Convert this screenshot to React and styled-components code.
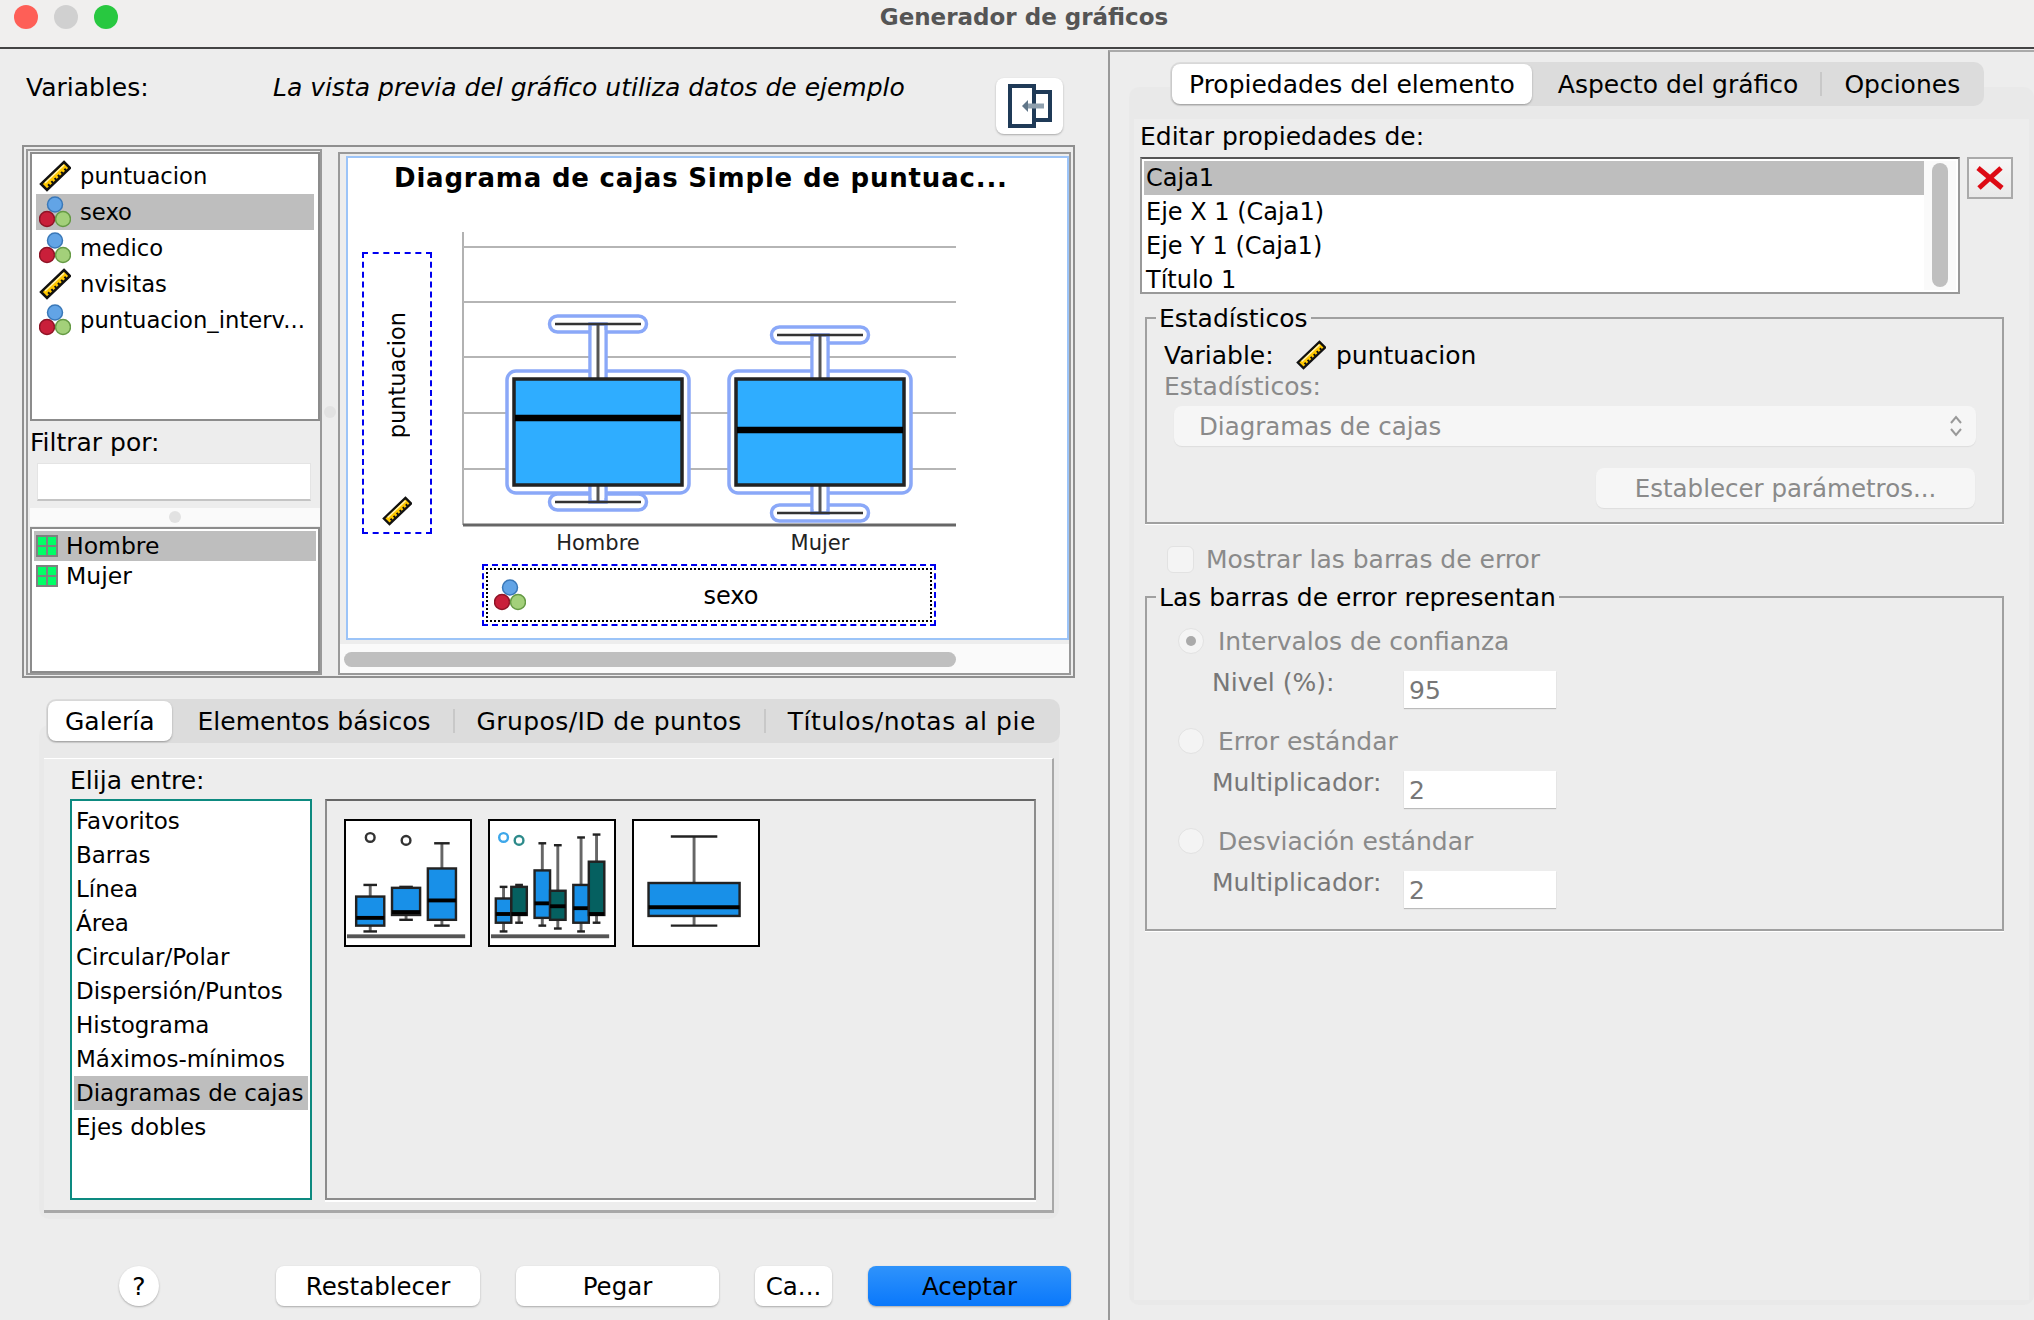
import { createGlobalStyle, styled } from "styled-components";

const FONT = `"DejaVu Sans", "Noto Sans", sans-serif`;
const PANEL = "#ededed";
const SELECTED = "#bebebe";
const HALO = "#8aa8f8";
const BOX_BLUE = "#2fadff";

const GlobalStyle = createGlobalStyle`
  html, body {
    margin: 0;
    background: ${PANEL};
  }

  body {
    color: #000;
    font-family: ${FONT};
    font-size: 25px;
  }
`;

const VARIABLES = [
  { name: "puntuacion", kind: "scale" },
  { name: "sexo", kind: "nominal", selected: true },
  { name: "medico", kind: "nominal" },
  { name: "nvisitas", kind: "scale" },
  { name: "puntuacion_interv...", kind: "nominal" },
];

const CATEGORIES = ["Favoritos", "Barras", "Línea", "Área", "Circular/Polar", "Dispersión/Puntos", "Histograma", "Máximos-mínimos", "Diagramas de cajas", "Ejes dobles"];

const CHART_BOXES = [
  { x: 598, top: 324, median: 418, bottom: 502 },
  { x: 820, top: 335, median: 430, bottom: 513 },
];

const THUMB_SIMPLE = [
  { x: 25, w: 29, top: 66, q3: 78, median: 100, q1: 108, bottom: 114, cap: 14 },
  { x: 62, w: 29, top: 68, q3: 69, median: 94, q1: 97, bottom: 102, cap: 14 },
  { x: 99, w: 29, top: 23, q3: 49, median: 82, q1: 102, bottom: 108, cap: 16 },
];

const THUMB_CLUSTERED = [
  { x: 14, w: 16, top: 68, q3: 80, median: 96, q1: 105, bottom: 114, cap: 8 },
  { x: 30, w: 16, top: 66, q3: 68, median: 96, q1: 97, bottom: 105, cap: 8, teal: true },
  { x: 54, w: 16, top: 23, q3: 51, median: 85, q1: 100, bottom: 108, cap: 8 },
  { x: 70, w: 16, top: 25, q3: 72, median: 88, q1: 102, bottom: 111, cap: 8, teal: true },
  { x: 94, w: 16, top: 17, q3: 66, median: 90, q1: 105, bottom: 114, cap: 8 },
  { x: 110, w: 16, top: 14, q3: 42, median: 96, q1: 97, bottom: 105, cap: 8, teal: true },
];

function ScaleIcon ({ size = 32 }) {
  return (
    <svg width={size} height={size} viewBox="0 0 32 32">
      <polygon fill="#ffc800" points="25,2 31,8 8,30 2,24" stroke="#111" strokeWidth="2.500" />
      <line stroke="#fff2b0" strokeWidth="1.500" x1="25" x2="6" y1="5" y2="23" />
      <line stroke="#111" strokeDasharray="2 2.500" strokeWidth="2.500" x1="27" x2="8" y1="9" y2="27" />
    </svg>
  );
}

function NominalIcon ({ size = 32 }) {
  return (
    <svg width={size} height={size} viewBox="0 0 32 32">
      <circle cx="16" cy="8.500" fill="#62a4e6" r="7.500" stroke="#3a78b8" strokeWidth="1.500" />
      <circle cx="8" cy="23" fill="#c91f3a" r="7.500" stroke="#8f1426" strokeWidth="1.500" />
      <circle cx="24" cy="23" fill="#a3d07a" r="7.500" stroke="#659a44" strokeWidth="1.500" />
    </svg>
  );
}

function CategoryIcon () {
  return (
    <svg width="22" height="22" viewBox="0 0 22 22">
      <rect fill="#808080" height="22" width="22" />
      <rect fill="#00ff66" height="8" width="8" x="2" y="2" />
      <rect fill="#00ff66" height="8" width="8" x="12" y="2" />
      <rect fill="#00ff66" height="8" width="8" x="2" y="12" />
      <rect fill="#00ff66" height="8" width="8" x="12" y="12" />
    </svg>
  );
}

function VariableIcon ({ kind, size }) {
  return kind === "scale" ? <ScaleIcon size={size} /> : <NominalIcon size={size} />;
}

function ChartBox ({ x, top, median, bottom }) {
  const boxTop = 379;
  const boxBottom = 485;

  return (
    <g>
      <rect fill="#fff" height="122" rx="9" stroke={HALO} strokeWidth="3.500" width="182" x={x - 91} y="371" />
      <rect fill="#fff" height="16" rx="8" stroke={HALO} strokeWidth="3.500" width="97" x={x - 48.5} y={top - 8} />
      <rect fill="#fff" height="16" rx="8" stroke={HALO} strokeWidth="3.500" width="97" x={x - 48.5} y={bottom - 8} />
      <rect fill="#fff" height={boxTop - top} stroke={HALO} strokeWidth="3.500" width="16" x={x - 8} y={top} />
      <rect fill="#fff" height={bottom - boxBottom} stroke={HALO} strokeWidth="3.500" width="16" x={x - 8} y={boxBottom} />
      <rect fill="#fff" height={boxTop - top + 10} width="12.500" x={x - 6.25} y={top + 6} />
      <rect fill="#fff" height={bottom - boxBottom + 2} width="12.500" x={x - 6.25} y={boxBottom - 6} />
      <line stroke="#555" strokeWidth="3" x1={x} x2={x} y1={top} y2={bottom} />
      <line stroke="#333" strokeWidth="2.500" x1={x - 43} x2={x + 43} y1={top} y2={top} />
      <line stroke="#333" strokeWidth="2.500" x1={x - 43} x2={x + 43} y1={bottom} y2={bottom} />
      <rect fill={BOX_BLUE} height={boxBottom - boxTop} stroke="#222" strokeWidth="3.500" width="168" x={x - 84} y={boxTop} />
      <line stroke="#000" strokeWidth="6.500" x1={x - 83} x2={x + 83} y1={median} y2={median} />
    </g>
  );
}

function ThumbBox ({ x, w, top, q3, median, q1, bottom, cap, teal }) {
  return (
    <g>
      <line stroke="#666" strokeWidth="3" x1={x} x2={x} y1={top} y2={bottom} />
      <line stroke="#222" strokeWidth="2.500" x1={x - cap / 2} x2={x + cap / 2} y1={top} y2={top} />
      <line stroke="#222" strokeWidth="2.500" x1={x - cap / 2} x2={x + cap / 2} y1={bottom} y2={bottom} />
      <rect fill={teal ? "#056060" : "#1890e8"} height={q1 - q3} stroke="#222" strokeWidth="2.500" width={w} x={x - w / 2} y={q3} />
      <line stroke="#000" strokeWidth="4" x1={x - w / 2} x2={x + w / 2} y1={median} y2={median} />
    </g>
  );
}

function ThumbSimple () {
  return (
    <Thumb viewBox="0 0 128 128">
      <circle cx="25" cy="17" fill="none" r="4.500" stroke="#333" strokeWidth="2.500" />
      <circle cx="62" cy="20" fill="none" r="4.500" stroke="#333" strokeWidth="2.500" />
      {THUMB_SIMPLE.map((b) => <ThumbBox key={b.x} {...b} />)}
      <rect fill="#555" height="4" width="122" x="1" y="117" />
    </Thumb>
  );
}

function ThumbClustered () {
  return (
    <Thumb viewBox="0 0 128 128">
      <circle cx="14" cy="17" fill="none" r="4.500" stroke="#3da7ea" strokeWidth="2.500" />
      <circle cx="30" cy="20" fill="none" r="4.500" stroke="#2d8a8a" strokeWidth="2.500" />
      {THUMB_CLUSTERED.map((b) => <ThumbBox key={b.x} {...b} />)}
      <rect fill="#555" height="4" width="122" x="1" y="117" />
    </Thumb>
  );
}

function ThumbSingle () {
  return (
    <Thumb viewBox="0 0 128 128">
      <ThumbBox bottom={108} cap={48} median={89} q1={98} q3={64} top={16} w={94} x={62} />
    </Thumb>
  );
}

export default function App () {
  return (
    <Window>
      <GlobalStyle />
      <TitleBar>
        <Lights>
          <Light $color="#fe5f57" />
          <Light $color="#d0d0d0" />
          <Light $color="#28c840" />
        </Lights>
        <WindowTitle>Generador de gráficos</WindowTitle>
      </TitleBar>
      <Body>
        <LeftPane>
          <TopRow>
            <VariablesLabel>Variables:</VariablesLabel>
            <PreviewNote>La vista previa del gráfico utiliza datos de ejemplo</PreviewNote>
            <ImportButton type="button">
              <svg width="44" height="44" viewBox="0 0 44 44">
                <path d="M2 2h24v40H2z M28 8h14v28H28" fill="none" stroke="#1f3a57" strokeWidth="4" />
                <path d="M19 22h17" stroke="#8fa0ae" strokeWidth="5" />
                <path d="M14 22l6-6v12z" fill="#5f7588" />
              </svg>
            </ImportButton>
          </TopRow>
          <Frame>
            <VarColumn>
              <VarList>
                {VARIABLES.map((v) => (
                  <VarRow key={v.name} $selected={v.selected}>
                    <VariableIcon kind={v.kind} />
                    {v.name}
                  </VarRow>
                ))}
              </VarList>
              <FilterLabel>Filtrar por:</FilterLabel>
              <FilterInput />
              <HSplitter><SplitDot /></HSplitter>
              <ValueList>
                <ValueRow $selected><CategoryIcon />Hombre</ValueRow>
                <ValueRow><CategoryIcon />Mujer</ValueRow>
              </ValueList>
            </VarColumn>
            <VSplitter><SplitDot /></VSplitter>
            <Preview>
              <Canvas>
                <ChartTitle>Diagrama de cajas Simple de puntuac...</ChartTitle>
                <Chart viewBox="348 158 720 480">
                  <line stroke="#999" strokeWidth="1.500" x1="463" x2="463" y1="232" y2="525" />
                  {[247, 302, 357, 413, 469].map((y) => (
                    <line key={y} stroke="#b5b5b5" strokeWidth="2" x1="463" x2="956" y1={y} y2={y} />
                  ))}
                  {CHART_BOXES.map((b) => <ChartBox key={b.x} {...b} />)}
                  <line stroke="#666" strokeWidth="3" x1="463" x2="956" y1="525" y2="525" />
                  <AxisLabel textAnchor="middle" x="598" y="550">Hombre</AxisLabel>
                  <AxisLabel textAnchor="middle" x="820" y="550">Mujer</AxisLabel>
                </Chart>
                <YDropZone>
                  <RotatedLabel>puntuacion</RotatedLabel>
                  <ScaleIcon size={30} />
                </YDropZone>
                <XDropZone>
                  <XDropInner>
                    <NominalIcon />
                    <XDropName>sexo</XDropName>
                  </XDropInner>
                </XDropZone>
              </Canvas>
              <HScroll><HThumb /></HScroll>
            </Preview>
          </Frame>
          <GalleryPane>
            <TabBar $offset={7} $overlap={18}>
              <Tab $active>Galería</Tab>
              <Tab $afterActive>Elementos básicos</Tab>
              <TabSep />
              <Tab $tracking={0.4}>Grupos/ID de puntos</Tab>
              <TabSep />
              <Tab $tracking={0.55}>Títulos/notas al pie</Tab>
            </TabBar>
            <GalleryPanel>
              <GalleryInner>
                <ChooseLabel>Elija entre:</ChooseLabel>
                <GalleryRow>
                  <ChartTypes>
                    {CATEGORIES.map((c) => (
                      <ChartType key={c} $selected={c === "Diagramas de cajas"}>{c}</ChartType>
                    ))}
                  </ChartTypes>
                  <Thumbs>
                    <ThumbSimple />
                    <ThumbClustered />
                    <ThumbSingle />
                  </Thumbs>
                </GalleryRow>
              </GalleryInner>
            </GalleryPanel>
          </GalleryPane>
          <Footer>
            <HelpButton type="button">?</HelpButton>
            <FooterButton $width={204} type="button">Restablecer</FooterButton>
            <FooterButton $width={203} type="button">Pegar</FooterButton>
            <FooterButton $width={77} type="button">Ca...</FooterButton>
            <FooterButton $primary $width={203} type="button">Aceptar</FooterButton>
          </Footer>
        </LeftPane>
        <RightPane>
          <TabBar $offset={41} $overlap={19}>
            <Tab $active>Propiedades del elemento</Tab>
            <Tab $afterActive>Aspecto del gráfico</Tab>
            <TabSep />
            <Tab>Opciones</Tab>
          </TabBar>
          <PropsPanel>
            <PropsInner>
              <PropsLabel>Editar propiedades de:</PropsLabel>
              <ElementRow>
                <ElementList>
                  <ElementRows>
                    <ElementItem $selected>Caja1</ElementItem>
                    <ElementItem>Eje X 1 (Caja1)</ElementItem>
                    <ElementItem>Eje Y 1 (Caja1)</ElementItem>
                    <ElementItem>Título 1</ElementItem>
                  </ElementRows>
                  <ListScroll><ListThumb /></ListScroll>
                </ElementList>
                <DeleteButton type="button">
                  <svg width="30" height="26" viewBox="0 0 30 26">
                    <path d="M3 3l24 20M26 3L4 23" fill="none" stroke="#dd0a14" strokeWidth="5" />
                  </svg>
                </DeleteButton>
              </ElementRow>
              <Group $height={207} $pad={18}>
                <Legend>Estadísticos</Legend>
                <VariableLine>
                  <span>Variable:</span>
                  <ScaleIcon size={30} />
                  <span>puntuacion</span>
                </VariableLine>
                <MutedLine>Estadísticos:</MutedLine>
                <SelectBox>
                  Diagramas de cajas
                  <svg width="16" height="26" viewBox="0 0 16 26">
                    <path d="M3 10l5-6 5 6M3 16l5 6 5-6" fill="none" stroke="#999" strokeWidth="2" />
                  </svg>
                </SelectBox>
                <ParamsButton type="button">Establecer parámetros...</ParamsButton>
              </Group>
              <CheckLine>
                <CheckBox />
                Mostrar las barras de error
              </CheckLine>
              <Group $height={335} $pad={30}>
                <Legend>Las barras de error representan</Legend>
                <RadioBlock>
                  <RadioLine><Radio $checked />Intervalos de confianza</RadioLine>
                  <FieldLine><FieldLabel>Nivel (%):</FieldLabel><FieldInput>95</FieldInput></FieldLine>
                </RadioBlock>
                <RadioBlock>
                  <RadioLine><Radio />Error estándar</RadioLine>
                  <FieldLine><FieldLabel>Multiplicador:</FieldLabel><FieldInput>2</FieldInput></FieldLine>
                </RadioBlock>
                <RadioBlock>
                  <RadioLine><Radio />Desviación estándar</RadioLine>
                  <FieldLine><FieldLabel>Multiplicador:</FieldLabel><FieldInput>2</FieldInput></FieldLine>
                </RadioBlock>
              </Group>
            </PropsInner>
          </PropsPanel>
        </RightPane>
      </Body>
    </Window>
  );
}

const Window = styled.div`
  background: ${PANEL};
  display: flex;
  flex-direction: column;
  height: 1320px;
  overflow: hidden;
  width: 2034px;
`;

const TitleBar = styled.header`
  align-items: center;
  background: #f0efee;
  border-bottom: 2px solid #444;
  box-sizing: border-box;
  display: grid;
  flex: none;
  grid-template-columns: 1fr auto 1fr;
  height: 49px;
  padding: 0 0 14px 14px;
`;

const Lights = styled.div`
  display: flex;
  gap: 16px;
`;

const Light = styled.span`
  background: ${(p) => p.$color};
  border-radius: 50%;
  height: 24px;
  width: 24px;
`;

const WindowTitle = styled.div`
  color: #555;
  font-size: 23px;
  font-weight: 700;
`;

const Body = styled.div`
  display: flex;
  flex: 1;
  min-height: 0;
`;

const LeftPane = styled.div`
  display: flex;
  flex: none;
  flex-direction: column;
  width: 1108px;
`;

const TopRow = styled.div`
  align-items: flex-start;
  box-sizing: border-box;
  display: flex;
  flex: none;
  height: 96px;
  padding: 24px 0 0 26px;
`;

const VariablesLabel = styled.div`
  width: 247px;
`;

const PreviewNote = styled.div`
  font-style: italic;
  width: 723px;
`;

const ImportButton = styled.button`
  align-items: center;
  background: #fff;
  border: none;
  border-radius: 8px;
  box-shadow: 0 1px 2px #aaa;
  display: flex;
  height: 56px;
  justify-content: center;
  margin-top: 5px;
  padding: 0;
  width: 67px;
`;

const Frame = styled.div`
  border: 2px solid #8f8f8f;
  box-sizing: border-box;
  display: flex;
  flex: none;
  height: 533px;
  margin-left: 22px;
  padding: 2px 2px 1px;
  width: 1053px;
`;

const VarColumn = styled.div`
  border: 2px solid #999;
  box-sizing: border-box;
  display: flex;
  flex: none;
  flex-direction: column;
  padding: 1px 0 0 2px;
  width: 296px;
`;

const VarList = styled.div`
  background: #fff;
  border: 2px solid #8c8c8c;
  box-sizing: border-box;
  flex: none;
  font-size: 22.7px;
  height: 269px;
  padding: 4px 4px;
`;

const VarRow = styled.div`
  align-items: center;
  background: ${(p) => (p.$selected ? SELECTED : "transparent")};
  display: flex;
  gap: 9px;
  height: 36px;
  padding-left: 3px;
`;

const FilterLabel = styled.div`
  align-items: center;
  display: flex;
  flex: none;
  height: 42px;
`;

const FilterInput = styled.div`
  background: #fff;
  border: 1px solid #e4e4e4;
  border-bottom: 2px solid #c4c4c4;
  box-sizing: border-box;
  flex: none;
  height: 38px;
  margin-left: 7px;
  width: 274px;
`;

const HSplitter = styled.div`
  align-items: center;
  background: #fafafa;
  display: flex;
  flex: none;
  height: 18px;
  justify-content: center;
  margin-top: 7px;
`;

const SplitDot = styled.span`
  background: #e2e2e2;
  border-radius: 50%;
  height: 12px;
  width: 12px;
`;

const ValueList = styled.div`
  background: #fff;
  border: 2px solid #8c8c8c;
  box-sizing: border-box;
  flex: 1;
  font-size: 23.5px;
  margin-top: 1px;
  padding: 2px;
`;

const ValueRow = styled.div`
  align-items: center;
  background: ${(p) => (p.$selected ? SELECTED : "transparent")};
  display: flex;
  gap: 8px;
  height: 30px;
  padding-left: 2px;
`;

const VSplitter = styled.div`
  align-items: center;
  display: flex;
  flex: none;
  justify-content: center;
  width: 16px;
`;

const Preview = styled.div`
  border: 2px solid #999;
  box-sizing: border-box;
  display: flex;
  flex: 1;
  flex-direction: column;
  margin-top: 3px;
  min-width: 0;
  padding: 2px 0 0 6px;
`;

const Canvas = styled.div`
  background: #fff;
  border: 2px solid #9cc4f8;
  box-sizing: border-box;
  flex: none;
  height: 484px;
  position: relative;
`;

const ChartTitle = styled.div`
  font-size: 26px;
  font-weight: 700;
  left: 46px;
  letter-spacing: .8px;
  position: absolute;
  top: 5px;
  white-space: nowrap;
`;

const Chart = styled.svg`
  height: 480px;
  left: 0;
  position: absolute;
  top: 0;
  width: 720px;
`;

const AxisLabel = styled.text`
  fill: #222;
  font-family: ${FONT};
  font-size: 21px;
`;

const YDropZone = styled.div`
  align-items: center;
  border: 2px dashed #0000f0;
  box-sizing: border-box;
  display: flex;
  flex-direction: column;
  font-size: 22.5px;
  height: 282px;
  justify-content: space-between;
  left: 14px;
  padding: 58px 0 6px;
  position: absolute;
  top: 94px;
  width: 70px;
`;

const RotatedLabel = styled.span`
  transform: rotate(180deg);
  writing-mode: vertical-rl;
`;

const XDropZone = styled.div`
  border: 2px dashed #0000f0;
  box-sizing: border-box;
  height: 62px;
  left: 134px;
  padding: 2px;
  position: absolute;
  top: 406px;
  width: 454px;
`;

const XDropInner = styled.div`
  align-items: center;
  border: 2px dotted #000;
  box-sizing: border-box;
  display: flex;
  font-size: 24px;
  height: 100%;
  padding-left: 6px;
`;

const XDropName = styled.span`
  flex: 1;
  padding: 2px 0 0 6px;
  text-align: center;
`;

const HScroll = styled.div`
  background: #fafafa;
  flex: 1;
  margin: 4px 0 0 -6px;
  padding: 8px 0 0 4px;
`;

const HThumb = styled.div`
  background: #bfbfbf;
  border-radius: 8px;
  height: 15px;
  width: 612px;
`;

const GalleryPane = styled.div`
  display: flex;
  flex: none;
  flex-direction: column;
  margin: 21px 0 0 39px;
  width: 1020px;
`;

const TabBar = styled.div`
  align-items: center;
  align-self: flex-start;
  background: #dcdcdc;
  border-radius: 10px;
  box-sizing: border-box;
  display: flex;
  flex: none;
  height: 44px;
  margin-bottom: -${(p) => p.$overlap}px;
  margin-left: ${(p) => p.$offset}px;
  padding: 0 2px;
  position: relative;
  z-index: 1;
`;

const Tab = styled.div`
  align-items: center;
  background: ${(p) => (p.$active ? "#fff" : "transparent")};
  border-radius: 8px;
  box-shadow: ${(p) => (p.$active ? "0 1px 2px #999" : "none")};
  display: flex;
  height: 40px;
  letter-spacing: ${(p) => p.$tracking || 0}px;
  margin-left: ${(p) => (p.$afterActive ? "4px" : "0")};
  padding: 0 ${(p) => (p.$active ? "17px" : "22px")};
  white-space: nowrap;
`;

const TabSep = styled.span`
  background: #c8c8c8;
  height: 24px;
  width: 2px;
`;

const GalleryPanel = styled.div`
  background: #e9e9e9;
  border-radius: 10px;
  box-sizing: border-box;
  height: 494px;
  padding: 33px 5px 6px;
`;

const GalleryInner = styled.div`
  background: ${PANEL};
  border-bottom: 3px solid #a8a8a8;
  border-right: 2px solid #a8a8a8;
  border-top: 1px solid #fff;
  box-sizing: border-box;
  height: 100%;
  padding: 7px 16px 0 26px;
`;

const ChooseLabel = styled.div`
  height: 33px;
`;

const GalleryRow = styled.div`
  display: flex;
  gap: 13px;
  height: 401px;
`;

const ChartTypes = styled.div`
  background: #fff;
  border: 2px solid #0d8a80;
  box-sizing: border-box;
  flex: none;
  font-size: 23px;
  padding: 3px 2px;
  width: 242px;
`;

const ChartType = styled.div`
  align-items: center;
  background: ${(p) => (p.$selected ? SELECTED : "transparent")};
  display: flex;
  height: 34px;
  padding-left: 2px;
  white-space: nowrap;
`;

const Thumbs = styled.div`
  align-items: flex-start;
  border: 2px solid #8c8c8c;
  border-top-color: #666;
  box-shadow: 0 2px 0 #fff;
  box-sizing: border-box;
  display: flex;
  flex: 1;
  gap: 16px;
  padding: 18px 17px;
`;

const Thumb = styled.svg`
  background: #fff;
  border: 2px solid #000;
  box-sizing: border-box;
  flex: none;
  height: 128px;
  width: 128px;
`;

const Footer = styled.div`
  align-items: center;
  display: flex;
  flex: none;
  gap: 36px;
  margin-top: 47px;
  padding-left: 119px;
`;

const HelpButton = styled.button`
  background: #fff;
  border: none;
  border-radius: 50%;
  box-shadow: 0 1px 2px #aaa;
  font-family: ${FONT};
  font-size: 25px;
  height: 40px;
  margin-right: 81px;
  padding: 0;
  width: 40px;
`;

const FooterButton = styled.button`
  background: ${(p) => (p.$primary ? "linear-gradient(#2f93fb, #0a78fb)" : "#fff")};
  border: none;
  border-radius: 8px;
  box-shadow: 0 1px 2px #aaa;
  color: #000;
  font-family: ${FONT};
  font-size: 24.5px;
  height: 40px;
  padding: 0;
  width: ${(p) => p.$width}px;
`;

const RightPane = styled.div`
  border-left: 2px solid #999;
  border-top: 2px solid #aaa;
  box-sizing: border-box;
  display: flex;
  flex: 1;
  flex-direction: column;
  margin-top: 1px;
  padding: 10px 12px 15px 19px;
`;

const PropsPanel = styled.div`
  background: #e9e9e9;
  border-radius: 10px;
  box-sizing: border-box;
  flex: 1;
  padding: 32px 5px 5px;
`;

const PropsInner = styled.div`
  background: ${PANEL};
  box-sizing: border-box;
  height: 100%;
  padding: 3px 16px 0 6px;
`;

const PropsLabel = styled.div`
  height: 35px;
`;

const ElementRow = styled.div`
  display: flex;
  gap: 7px;
  margin-bottom: 23px;
`;

const ElementList = styled.div`
  background: #fff;
  border: 2px solid #999;
  border-top-color: #555;
  box-sizing: border-box;
  display: flex;
  font-size: 24px;
  height: 137px;
  overflow: hidden;
  padding: 2px;
  width: 820px;
`;

const ElementRows = styled.div`
  flex: 1;
`;

const ElementItem = styled.div`
  align-items: center;
  background: ${(p) => (p.$selected ? SELECTED : "transparent")};
  display: flex;
  height: 34px;
  padding-left: 2px;
`;

const ListScroll = styled.div`
  background: #fafafa;
  box-sizing: border-box;
  flex: none;
  padding: 2px 8px 0;
  width: 32px;
`;

const ListThumb = styled.div`
  background: #bfbfbf;
  border-radius: 8px;
  height: 124px;
`;

const DeleteButton = styled.button`
  align-items: center;
  align-self: flex-start;
  background: linear-gradient(#f6f6f6, #e9e9e9);
  border: 2px solid #aaa;
  box-sizing: border-box;
  display: flex;
  height: 42px;
  justify-content: center;
  padding: 0;
  width: 46px;
`;

const Group = styled.section`
  border: 2px solid #a0a0a0;
  box-shadow: 0 1px 0 #fff;
  box-sizing: border-box;
  height: ${(p) => p.$height}px;
  margin-left: 5px;
  padding: ${(p) => p.$pad}px 17px 0;
  position: relative;
  width: 859px;
`;

const Legend = styled.div`
  background: ${PANEL};
  left: 9px;
  padding: 0 3px;
  position: absolute;
  top: -15px;
`;

const VariableLine = styled.div`
  align-items: center;
  display: flex;
  gap: 10px;
  height: 36px;

  & span:first-child {
    width: 122px;
  }
`;

const MutedLine = styled.div`
  color: #8a8a8a;
  height: 28px;
  line-height: 28px;
`;

const SelectBox = styled.div`
  align-items: center;
  background: #f6f6f6;
  border-radius: 8px;
  box-shadow: 0 1px 1px #ddd;
  color: #8a8a8a;
  display: flex;
  font-size: 24.5px;
  height: 40px;
  justify-content: space-between;
  margin: 5px 9px 0 10px;
  padding: 0 12px 0 25px;
`;

const ParamsButton = styled.button`
  background: #f6f6f6;
  border: none;
  border-radius: 8px;
  box-shadow: 0 1px 1px #ddd;
  color: #8a8a8a;
  display: block;
  font-family: ${FONT};
  font-size: 24.5px;
  height: 40px;
  margin: 22px 10px 0 auto;
  padding: 0;
  width: 379px;
`;

const CheckLine = styled.div`
  align-items: center;
  color: #8a8a8a;
  display: flex;
  gap: 12px;
  height: 28px;
  margin: 21px 0 23px 27px;
`;

const CheckBox = styled.span`
  background: #f4f4f4;
  border: 1px solid #e2e2e2;
  border-radius: 6px;
  box-sizing: border-box;
  height: 27px;
  width: 27px;
`;

const RadioBlock = styled.div`
  margin-bottom: 20px;
`;

const RadioLine = styled.div`
  align-items: center;
  color: #8a8a8a;
  display: flex;
  gap: 14px;
  height: 26px;
  padding-left: 14px;
`;

const Radio = styled.span`
  align-items: center;
  background: #f4f4f4;
  border: 1px solid #e2e2e2;
  border-radius: 50%;
  box-sizing: border-box;
  display: flex;
  height: 26px;
  justify-content: center;
  width: 26px;

  &::after {
    background: #aaa;
    border-radius: 50%;
    content: "";
    display: ${(p) => (p.$checked ? "block" : "none")};
    height: 10px;
    width: 10px;
  }
`;

const FieldLine = styled.div`
  align-items: flex-start;
  color: #777;
  display: flex;
  margin-top: 17px;
  padding-left: 48px;
`;

const FieldLabel = styled.div`
  line-height: 28px;
  margin-top: -2px;
  width: 192px;
`;

const FieldInput = styled.div`
  align-items: center;
  background: #fff;
  box-shadow: 0 1px 1px #bbb;
  box-sizing: border-box;
  display: flex;
  height: 37px;
  padding: 2px 0 0 5px;
  width: 152px;
`;
